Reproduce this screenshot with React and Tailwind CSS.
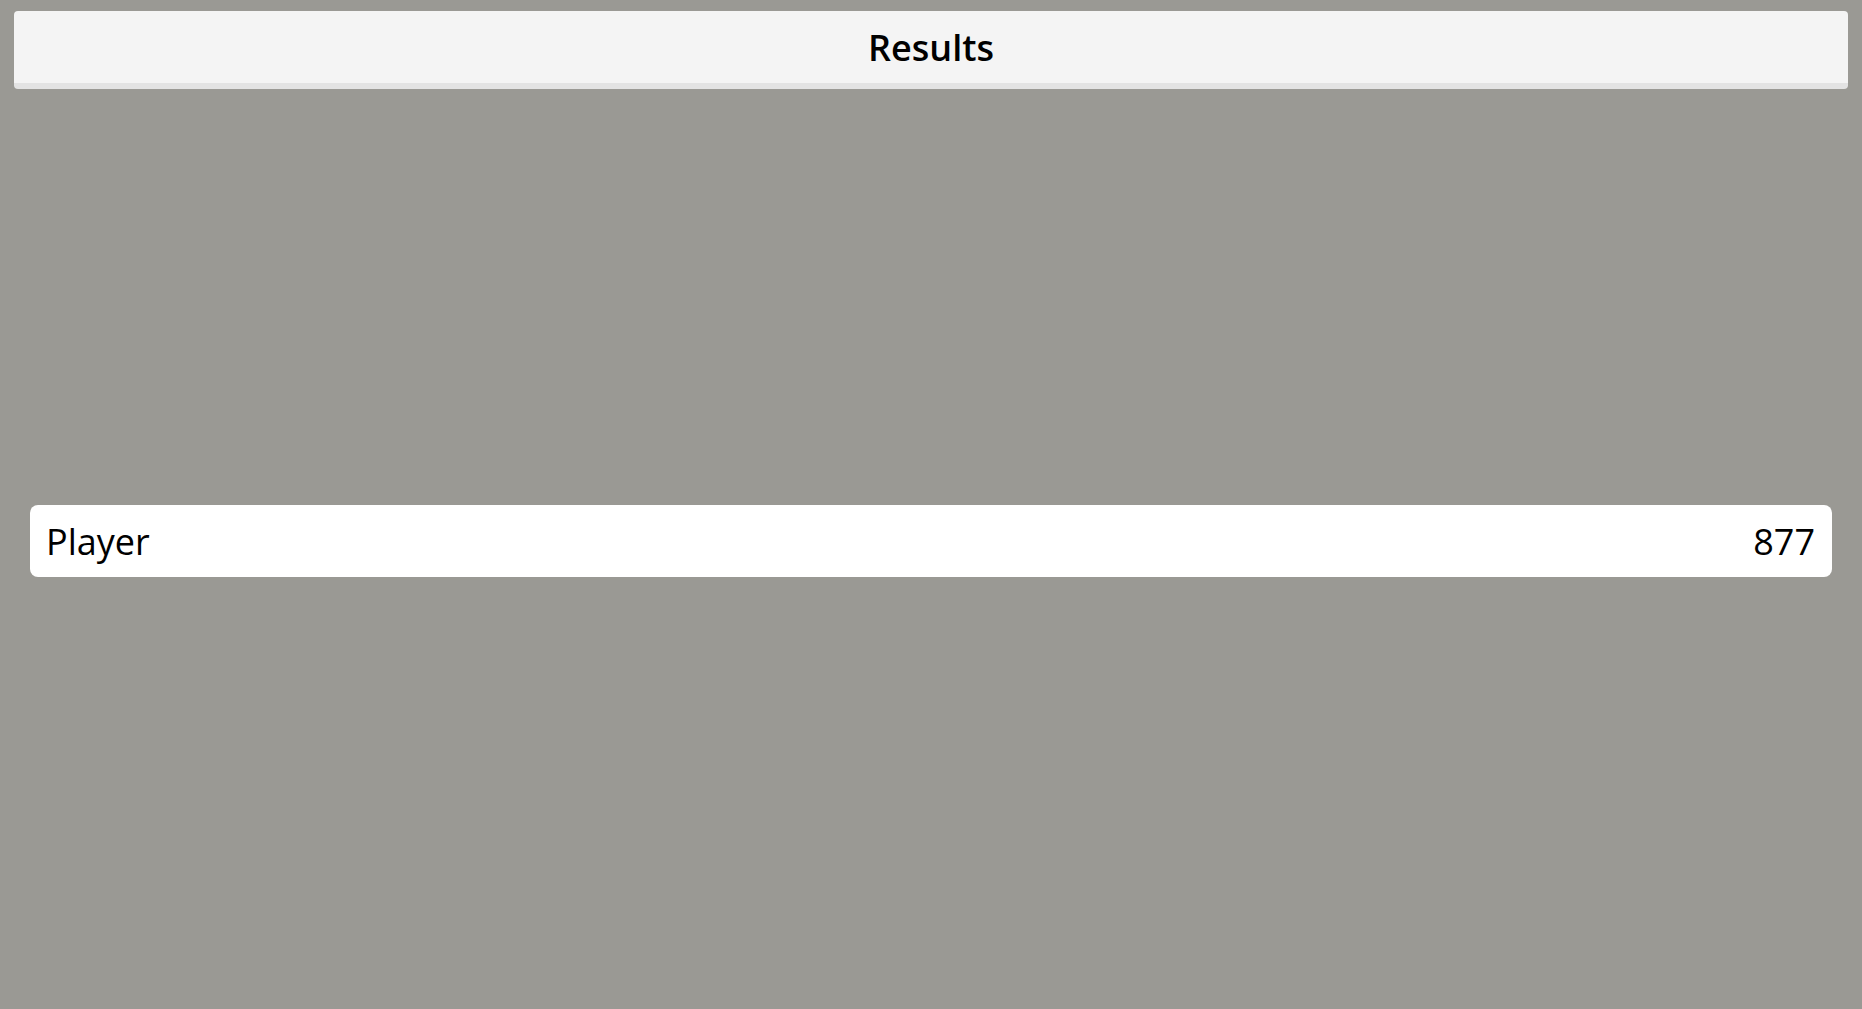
import React from "react";

function App() {
  return (
    <div
      className="min-h-screen bg-[#9a9994] flex flex-col pt-[11px]"
      style={{ fontFamily: '"Open Sans", "Liberation Sans", sans-serif' }}
    >
      <header className="mx-[14px] h-[78px] bg-[#f4f4f4] rounded-[4px] border-b-[6px] border-[#e3e3e3] flex items-center justify-center pt-[2px]">
        <h1 className="text-[36px] leading-none font-semibold text-black">
          Results
        </h1>
      </header>

      <main className="px-[30px] pt-[416px]">
        <div className="h-[72px] bg-white rounded-[8px] flex items-center justify-between pl-4 pr-[17px] pt-[2px] text-[36px] text-black">
          <span>Player</span>
          <span>877</span>
        </div>
      </main>
    </div>
  );
}

export default App;
